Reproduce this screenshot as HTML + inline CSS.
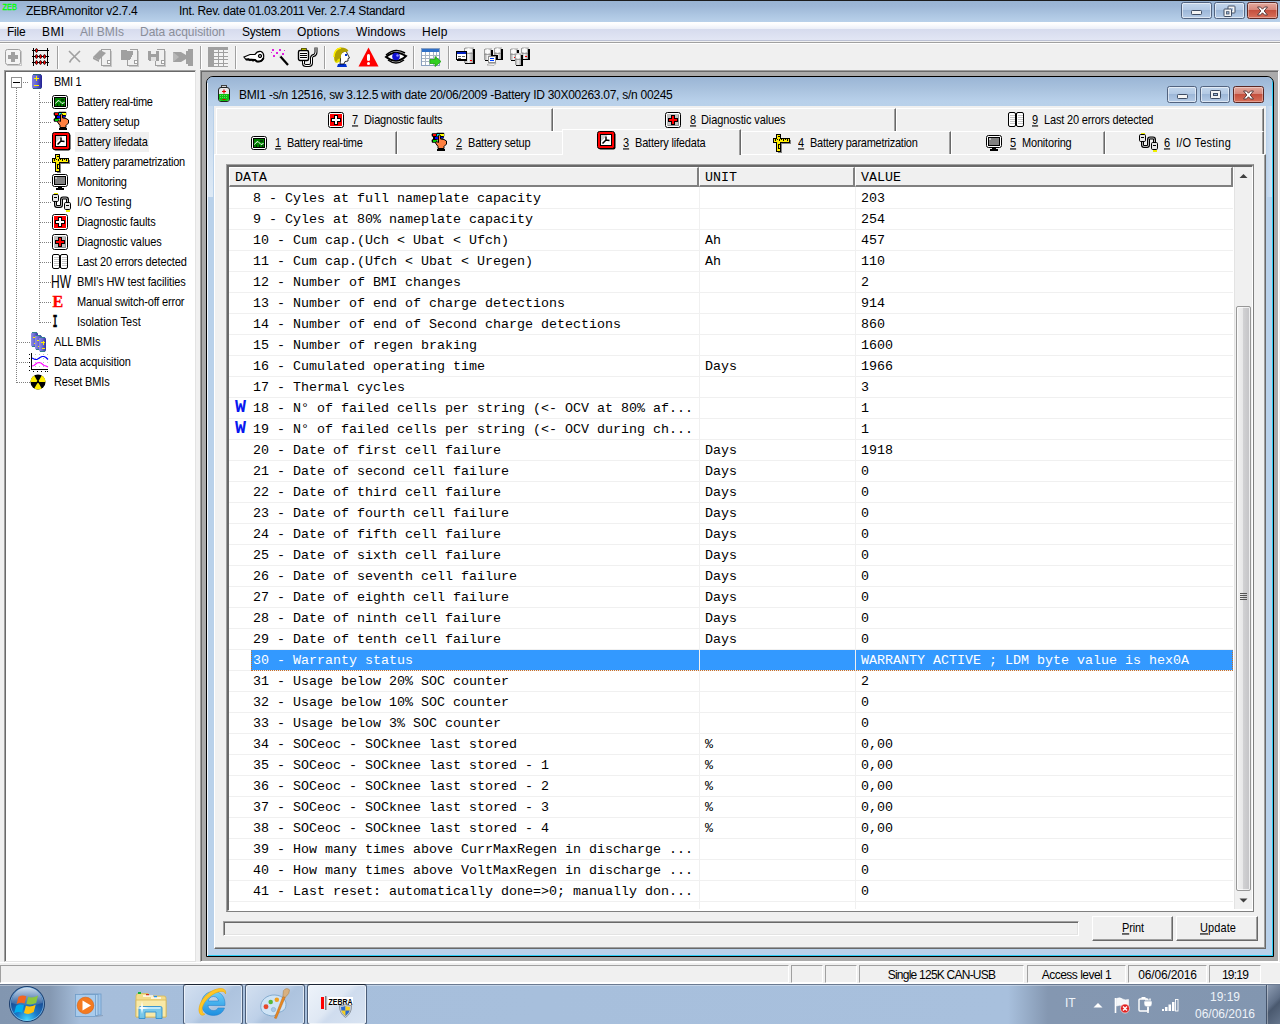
<!DOCTYPE html>
<html><head><meta charset="utf-8"><title>ZEBRAmonitor v2.7.4</title>
<style>
*{box-sizing:border-box;margin:0;padding:0}
html,body{width:1280px;height:1024px;overflow:hidden;background:#f0f0f0;font-family:"Liberation Sans",sans-serif;color:#000}
.a{position:absolute}
svg{position:absolute;overflow:visible}
/* ---------- main title bar ---------- */
#title{left:0;top:0;width:1280px;height:22px;background:linear-gradient(#99b4d3 0,#9db7d6 5px,#adc6e2 14px,#b9d1ea 21px);border-top:1px solid #1c1c1c}
#title span{position:absolute;top:3px;font-size:12px;white-space:nowrap;color:#000}
.cb{position:absolute;top:5px;height:17px;border:1px solid #52637f;border-radius:2.500px;background:linear-gradient(#c3d6ec 0,#b3c9e4 45%,#9db7d8 50%,#b5cbe6 100%);box-shadow:inset 0 0 0 1px rgba(255,255,255,.55)}
.cb.x{border-color:#5b2824;background:linear-gradient(#e3a99d 0,#d5867a 45%,#c4503e 50%,#d8705a 100%);box-shadow:inset 0 0 0 1px rgba(255,255,255,.35)}
/* ---------- menu ---------- */
#menu{left:0;top:22px;width:1280px;height:19px;background:linear-gradient(#ffffff 0,#fdfdfe 2px,#eceff8 7px,#d6dbee 7px,#e2e6f4 18px,#bcc1d4 18px,#bcc1d4 19px)}
#menu span{position:absolute;top:3px;font-size:12px;white-space:nowrap}
#menu span.g{color:#8a8e99}
/* ---------- toolbar ---------- */
#tb{left:0;top:41px;width:1280px;height:29px;background:linear-gradient(#f0f0f0 0,#f0f0f0 1px,#a0a0a0 1px,#a0a0a0 2px,#fff 2px,#fff 3px,#f0f0f0 3px)}
.sep{position:absolute;top:5px;width:2px;height:23px;border-left:1px solid #a0a0a0;border-right:1px solid #fff}
/* ---------- tree ---------- */
#tree{left:4px;top:70px;width:192px;height:892px;background:#fff;border:1px solid #a0a0a0;border-right-color:#e3e3e3;border-bottom-color:#e3e3e3;box-shadow:inset 1px 1px 0 #696969}
.ti{position:absolute;font-size:11px;white-space:nowrap;height:20px;line-height:20px;letter-spacing:0}
.ti b,.tl b,.btn b{display:inline-block;font-weight:normal;transform:scaleY(1.13);transform-origin:0 62%}
/* ---------- mdi ---------- */
#mdi{left:200px;top:70px;width:1079px;height:892px;background:#ababab;border:1px solid #a0a0a0;border-right-color:#fff;border-bottom-color:#fff;box-shadow:inset 1px 1px 0 #696969}
#child{left:206px;top:76px;width:1068px;height:881px;background:#b9d1ea;border:1px solid #000;border-radius:7px 7px 0 0;box-shadow:inset -1px -1px 0 0 #2ccdf6}
#ctitle{left:0px;top:0px;width:1065px;height:29px;border-radius:6px 6px 0 0;background:linear-gradient(#9ab5d5 0,#a9c2de 12px,#b8d0ea 24px,#b9d1ea 28px)}
#ctitle span{position:absolute;left:32px;top:11px;font-size:12px;white-space:nowrap}
#client{left:7px;top:29px;width:1052px;height:843px;background:#f0f0f0}
/* tabs */
.tab{position:absolute;height:22px;background:#f0f0f0;border-top:1px solid #fff;border-left:1px solid #fff;border-right:1px solid #696969;box-shadow:inset -1px 0 0 #a0a0a0}
.tl{position:absolute;font-size:11px;white-space:nowrap;z-index:4;line-height:13px}
/* table */
#tbl{left:226px;top:164px;width:1028px;height:748px;border:1px solid #a0a0a0;border-right-color:#808080;border-bottom-color:#808080;background:#fff}
#tbl2{left:0;top:0;width:1026px;height:746px;border:2px solid #696969;border-right-width:1px;border-bottom-width:1px;border-right-color:#fff;border-bottom-color:#fff;}
#tin{left:229px;top:167px;width:1023px;height:742px;background:#fff;overflow:hidden;font-family:"Liberation Mono",monospace;font-size:13.33px}
.hd{position:absolute;top:0;height:20px;background:#f0f0f0;border-top:1px solid #fff;border-left:1px solid #fff;border-right:2px solid #808080;border-bottom:2px solid #808080;font-size:13.33px;line-height:19px;padding-left:5px}
.row{position:absolute;left:0;width:1004px;height:21px;border-bottom:1px solid #f0f0f0;line-height:22px;white-space:pre}
.row span{position:absolute;top:0;height:20px}
.row .d{left:22px;width:448px;padding-left:2px}
.row .u{left:476px}
.row .v{left:632px}
.row.sel .d{background:#3399ff;color:#fff}
.row.sel .u{left:470px;width:156px;background:#3399ff}
.row.sel .v{left:627px;width:377px;padding-left:5px;background:#3399ff;color:#fff}
.row .w{position:absolute;left:4px;top:-1px;color:#0000d0;font-family:"Liberation Serif",serif;font-size:15px;font-weight:bold;-webkit-text-stroke:.4px #0000d0}
.foc{position:absolute;left:22px;top:0;width:982px;height:21px;border:1px dotted #c8702a;border-top-color:transparent;z-index:6}
.vl{position:absolute;top:20px;width:1px;height:722px;background:#f0f0f0;z-index:5}
/* status */
#status{left:0;top:962px;width:1280px;height:22px;background:#f0f0f0;border-top:1px solid #fff;border-bottom:1px solid #fff}
.sp{position:absolute;top:2px;height:18px;border:1px solid #a0a0a0;border-right-color:#fff;border-bottom-color:#fff;font-size:12px;text-align:center;line-height:18px;white-space:nowrap}
/* taskbar */
#task{left:0;top:984px;width:1280px;height:40px;background:linear-gradient(90deg,#8296b0 0,#8498b2 50px,#a6bedb 80px,#a8c0dd 1008px,#8497b1 1048px,#8296b0 1280px);border-top:1px solid #6b7a91;box-shadow:inset 0 1px 0 rgba(255,255,255,.35)}
.tbtn{position:absolute;top:-1px;width:60px;height:41px;border:1px solid #4b5d78;border-top-color:#1b2535;border-radius:3px;background:linear-gradient(135deg,#d3e0f0 0,#bdd0e8 45%,#adc3de 55%,#b6cbe5 100%);box-shadow:inset 0 0 0 1px rgba(255,255,255,.6)}
.tbtn.act{background:linear-gradient(135deg,#eef3fa 0,#dfe8f4 45%,#cfdcee 55%,#d9e4f2 100%)}
.btn{position:absolute;height:25px;border:1px solid #fff;border-right-color:#696969;border-bottom-color:#696969;box-shadow:inset -1px -1px 0 #a0a0a0;font-size:11px;text-align:center;line-height:20px;background:#f0f0f0}
</style></head><body>

<!-- main title -->
<div id="title" class="a">
<svg style="left:2px;top:0" width="20" height="16"><text x="0.500" y="8.500" font-family="Liberation Sans, sans-serif" font-size="9.500" fill="#00ff00" stroke="#00ff00" stroke-width=".3" textLength="14.500" lengthAdjust="spacingAndGlyphs">ZEB</text></svg>
<span style="left:26px;letter-spacing:-0.239px">ZEBRAmonitor v2.7.4</span>
<span style="left:179px;letter-spacing:-0.301px">Int. Rev. date 01.03.2011 Ver. 2.7.4 Standard</span>
<div class="cb" style="left:1181px;top:1px;width:31px"><svg width="29" height="15" style="left:0;top:0"><rect x="9.500" y="7.500" width="10" height="4" rx=".8" fill="#f4f4f4" stroke="#3e4c63"/></svg></div>
<div class="cb" style="left:1214px;top:1px;width:31px"><svg width="29" height="15" style="left:0;top:0"><rect x="13" y="3" width="7" height="7" rx=".8" fill="#f4f4f4" stroke="#3e4c63"/><rect x="15" y="5" width="3" height="3" fill="#a9c0de"/><rect x="9" y="6" width="7.500" height="7.500" rx=".8" fill="#f4f4f4" stroke="#3e4c63"/><rect x="11.500" y="8.700" width="2.500" height="2.300" fill="#9db7d8" stroke="#3e4c63" stroke-width=".8"/></svg></div>
<div class="cb x" style="left:1247px;top:1px;width:31px"><svg width="29" height="15" style="left:0;top:0.500px"><path d="M9.500 3 L12.500 3 L14.500 5.200 L16.500 3 L19.500 3 L16.200 7 L19.500 11 L16.500 11 L14.500 8.800 L12.500 11 L9.500 11 L12.800 7 Z" fill="#fff" stroke="#5b3a3a" stroke-width="1"/></svg></div>
</div>

<!-- menu -->
<div id="menu" class="a">
<span class="" style="left:7px;letter-spacing:-0.211px">File</span><span class="" style="left:42px;letter-spacing:0.385px">BMI</span><span class="g" style="left:80px;letter-spacing:-0.002px">All BMIs</span><span class="g" style="left:140px;letter-spacing:-0.024px">Data acquisition</span><span class="" style="left:242px;letter-spacing:-0.253px">System</span><span class="" style="left:297px;letter-spacing:0.199px">Options</span><span class="" style="left:356px;letter-spacing:0.152px">Windows</span><span class="" style="left:422px;letter-spacing:0.266px">Help</span>
</div>

<!-- toolbar -->
<div id="tb" class="a">
<svg style="left:5px;top:8px" width="17" height="17" viewBox="0 0 17 17" shape-rendering="crispEdges" ><rect x=".5" y=".5" width="15" height="15" rx="2" fill="#f4f4f4" stroke="#a0a0a0" shape-rendering="auto"/><path d="M1.500 16.500H15.500Q16.500 16.500 16.500 15.500V1.500" stroke="#c8c8c8" fill="none"/><path d="M6 3h4v3h3v4h-3v3h-4v-3h-3v-4h3z" fill="#a0a0a0"/></svg>
<svg style="left:32px;top:7px" width="18" height="18" viewBox="0 0 18 18" shape-rendering="crispEdges" ><path d="M1.500 0V18M15.500 0V18M0 2.500H17M0 8.500H17M0 14.500H17" stroke="#000" fill="none"/><ellipse cx="4.5" cy="2.5" rx="1.100" ry="2" fill="#f00" stroke="#000" stroke-width=".7" shape-rendering="auto"/><ellipse cx="4.5" cy="8.5" rx="1.100" ry="2" fill="#f00" stroke="#000" stroke-width=".7" shape-rendering="auto"/><ellipse cx="8.5" cy="8.5" rx="1.100" ry="2" fill="#f00" stroke="#000" stroke-width=".7" shape-rendering="auto"/><ellipse cx="12.5" cy="8.5" rx="1.100" ry="2" fill="#f00" stroke="#000" stroke-width=".7" shape-rendering="auto"/><ellipse cx="4.5" cy="14.5" rx="1.100" ry="2" fill="#f00" stroke="#000" stroke-width=".7" shape-rendering="auto"/><ellipse cx="8.5" cy="14.5" rx="1.100" ry="2" fill="#f00" stroke="#000" stroke-width=".7" shape-rendering="auto"/><ellipse cx="12.5" cy="14.5" rx="1.100" ry="2" fill="#f00" stroke="#000" stroke-width=".7" shape-rendering="auto"/></svg>
<div class="sep" style="left:57px"></div>
<svg style="left:68px;top:9px" width="15" height="14" viewBox="0 0 15 14" shape-rendering="crispEdges" ><path d="M1 1 L12 12 M12 1 L3 10 L1.500 12.500" stroke="#a0a0a0" stroke-width="1.600" fill="none" shape-rendering="auto"/></svg>
<svg style="left:92px;top:7px" width="21" height="19" viewBox="0 0 21 19" shape-rendering="crispEdges" ><path d="M9.500 1.500H18.500V17.500H9.500Z" fill="#f0f0f0" stroke="#a0a0a0"/><path d="M1 9 L8 2 L14 5 L7 12 Z" fill="#a0a0a0" shape-rendering="auto"/><path d="M1 9 L7 12 L7 14 L1 11 Z" fill="#a0a0a0" shape-rendering="auto"/><rect x="15.500" y="12.500" width="3" height="3" fill="#fff" stroke="#a0a0a0"/><path d="M10.500 18.500H19.500V3" stroke="#c8c8c8" fill="none"/></svg>
<svg style="left:120px;top:7px" width="21" height="19" viewBox="0 0 21 19" shape-rendering="crispEdges" ><path d="M9.500 1.500H17.500V17.500H7.500V10" fill="#f0f0f0" stroke="#a0a0a0"/><path d="M1 2h5l1 1h6v3H1z" fill="#a0a0a0"/><path d="M1 6 H13 L10 12 H1Z" fill="#a0a0a0"/><rect x="14.500" y="12.500" width="3" height="3" fill="#fff" stroke="#a0a0a0"/><path d="M8.500 18.500H18.500V3" stroke="#c8c8c8" fill="none"/></svg>
<svg style="left:147px;top:7px" width="21" height="19" viewBox="0 0 21 19" shape-rendering="crispEdges" ><path d="M9.500 1.500H17.500V17.500H8.500V12" fill="#f0f0f0" stroke="#a0a0a0"/><path d="M1 3h11v10H2l-1-1z" fill="#a0a0a0"/><rect x="4" y="3" width="5" height="3" fill="#f0f0f0"/><rect x="4" y="9" width="5" height="4" fill="#e0e0e0"/><rect x="14.500" y="12.500" width="3" height="3" fill="#fff" stroke="#a0a0a0"/><path d="M9.500 18.500H18.500V3" stroke="#c8c8c8" fill="none"/></svg>
<svg style="left:173px;top:7px" width="21" height="19" viewBox="0 0 21 19" shape-rendering="crispEdges" ><path d="M0 4 H8 L13 7 V3 H15 V1 H20 V18 H15 V16 H13 V11 L8 14 H0 Z" fill="#a0a0a0" shape-rendering="auto"/><path d="M0 4 L6 9 L0 14Z" fill="#b8b8b8" shape-rendering="auto"/></svg>
<div class="sep" style="left:200px"></div>
<svg style="left:208px;top:6px" width="20" height="20" viewBox="0 0 20 20" shape-rendering="crispEdges" ><rect x="0" y="0" width="20" height="20" fill="#a0a0a0"/><rect x="6" y="3.0" width="4" height="2.400" fill="#f4f4f4"/><rect x="11" y="3.0" width="4" height="2.400" fill="#f4f4f4"/><rect x="16" y="3.0" width="4" height="2.400" fill="#f4f4f4"/><rect x="6" y="6.4" width="4" height="2.400" fill="#f4f4f4"/><rect x="11" y="6.4" width="4" height="2.400" fill="#f4f4f4"/><rect x="16" y="6.4" width="4" height="2.400" fill="#f4f4f4"/><rect x="6" y="9.8" width="4" height="2.400" fill="#f4f4f4"/><rect x="11" y="9.8" width="4" height="2.400" fill="#f4f4f4"/><rect x="16" y="9.8" width="4" height="2.400" fill="#f4f4f4"/><rect x="6" y="13.2" width="4" height="2.400" fill="#f4f4f4"/><rect x="11" y="13.2" width="4" height="2.400" fill="#f4f4f4"/><rect x="16" y="13.2" width="4" height="2.400" fill="#f4f4f4"/><rect x="6" y="16.6" width="4" height="2.400" fill="#f4f4f4"/><rect x="11" y="16.6" width="4" height="2.400" fill="#f4f4f4"/><rect x="16" y="16.6" width="4" height="2.400" fill="#f4f4f4"/></svg>
<div class="sep" style="left:235px"></div>
<svg style="left:243px;top:9px" width="22" height="13" viewBox="0 0 22 13" shape-rendering="crispEdges" ><path d="M1 7 L7 4.500 H12 Q14 1 18 1.500 Q21.500 3 20.500 8 Q19 12 14 11.500 L12 10 L10 11 L8.500 9.500 L7 10.500 L5.500 9 L3 9.500 Z" fill="#fff" stroke="#000" stroke-width="1.200" shape-rendering="auto"/><path d="M3 9.500 L12 10 L14 11.500 Q19 12 20.500 8" stroke="#000" stroke-width="2" fill="none" shape-rendering="auto"/><circle cx="17" cy="6" r="1.700" fill="#808080" stroke="#000" shape-rendering="auto"/></svg>
<svg style="left:271px;top:7px" width="18" height="19" viewBox="0 0 18 19" shape-rendering="crispEdges" ><path d="M9 8 L17 17" stroke="#000" stroke-width="2.200" shape-rendering="auto"/><path d="M7.500 6.500 L9.500 8.500" stroke="#e8e8e8" stroke-width="2.200" shape-rendering="auto"/><g fill="#e020e0"><rect x="1" y="1" width="2" height="2"/><rect x="5" y="4" width="2" height="2"/><rect x="8" y="1" width="2" height="2"/><rect x="11" y="5" width="2" height="2"/><rect x="2" y="7" width="2" height="2"/><rect x="13" y="2" width="1" height="1"/><rect x="0" y="4" width="1" height="1"/></g></svg>
<svg style="left:297px;top:6px" width="21" height="20" viewBox="0 0 21 20" shape-rendering="crispEdges" ><rect x="4" y="1" width="5" height="2" fill="#ee0" stroke="#000" stroke-width=".6"/><rect x="1.500" y="3.500" width="10" height="10" rx="1.500" fill="#fff" stroke="#000" stroke-width="1.400" shape-rendering="auto"/><path d="M3 6.500h7M3 8.500h7M3 10.500h7" stroke="#000"/><path d="M6.500 14 V16.500 Q6.500 18.500 9 18.500 H12 Q14.500 18.500 14.500 16 V11 Q14.500 9 16.500 8.500 Q19 8 19 5 V0.500" fill="none" stroke="#000" stroke-width="3" shape-rendering="auto"/><path d="M6.500 14 V16.500 Q6.500 18.500 9 18.500 H12 Q14.500 18.500 14.500 16 V11 Q14.500 9 16.500 8.500 Q19 8 19 5 V0.500" fill="none" stroke="#fff" stroke-width="1" shape-rendering="auto"/></svg>
<div class="sep" style="left:324px"></div>
<svg style="left:333px;top:6px" width="18" height="20" viewBox="0 0 18 20" shape-rendering="crispEdges" ><path d="M2 8 Q0 16 4 16 L8 14 L9 6 Z" fill="#e8e000" shape-rendering="auto"/><path d="M5 17 L4 20 H14 L13 17 Z" fill="#0030d0" shape-rendering="auto"/><path d="M7 6 L13 4 L15 8 L16.500 11 L15 11.500 L15 14 L12 14.500 L11 17 L7 17 L7.500 13 Z" fill="#fff" stroke="#000" stroke-width=".8" shape-rendering="auto"/><path d="M1 9 Q1 1 8 .5 Q14 .5 15.500 4 L13 5 L10 5 L8 8 L8 11 L5 12 L3 15 Q1 13 1 9Z" fill="#b0a000" shape-rendering="auto"/><path d="M1 10 Q1 2 8 1" stroke="#ffef00" stroke-width="1.600" fill="none" shape-rendering="auto"/><rect x="12" y="7" width="2" height="2" fill="#0030d0"/></svg>
<svg style="left:358px;top:6px" width="21" height="20" viewBox="0 0 21 20" shape-rendering="crispEdges" ><path d="M10.500 0.500 L20.500 19.500 H0.500 Z" fill="#f00" shape-rendering="auto"/><rect x="9" y="7" width="3" height="7" rx="1.500" fill="#fff" shape-rendering="auto"/><circle cx="10.500" cy="16.500" r="1.500" fill="#fff" shape-rendering="auto"/></svg>
<svg style="left:385px;top:7px" width="22" height="16" viewBox="0 0 22 16" shape-rendering="crispEdges" ><path d="M1 7 Q10 -1 20 5" stroke="#000" stroke-width="1.500" fill="none" shape-rendering="auto"/><path d="M1 9 Q10 1 21 8 Q12 17 1 9Z" fill="#fff" stroke="#000" stroke-width="2" shape-rendering="auto"/><circle cx="11" cy="8.500" r="3.800" fill="#1010d0" shape-rendering="auto"/><circle cx="12.500" cy="7.500" r="1.200" fill="#9090ff" shape-rendering="auto"/><path d="M3 12 Q11 18 19 12" stroke="#000" stroke-width="1.500" fill="none" shape-rendering="auto"/></svg>
<div class="sep" style="left:413px"></div>
<svg style="left:421px;top:7px" width="21" height="19" viewBox="0 0 21 19" shape-rendering="crispEdges" ><rect x=".5" y=".5" width="18" height="17" fill="#fff" stroke="#8aa0c0"/><rect x="1" y="1" width="17" height="3" fill="#3070c8"/><path d="M1 7.500h17M1 10.500h17M1 13.500h17M4.500 4v13M8.500 4v13M12.500 4v13M15.500 4v13" stroke="#a8b4c4"/><path d="M9 11.500 H14 V8.500 L20 13.500 L14 18.500 V15.500 H9 Z" fill="#30d020" stroke="#20a010" stroke-width=".8" shape-rendering="auto"/></svg>
<div class="sep" style="left:448px"></div>
<svg style="left:456px;top:6px" width="21" height="20" viewBox="0 0 21 20" shape-rendering="crispEdges" ><defs><linearGradient id="tg" x1="0" x2="1"><stop offset="0" stop-color="#909090"/><stop offset=".5" stop-color="#f2f2f2"/><stop offset="1" stop-color="#a4a4a4"/></linearGradient></defs><g transform="translate(8,0)"><rect x="8.5" y="1.500" width="2.500" height="15" fill="#000"/><rect x="1" y="15" width="10" height="2" fill="#000"/><rect x="1" y="0" width="9" height="2" fill="#c8c8c8"/><rect x="0" y="1" width="9" height="15" fill="url(#tg)"/><rect x="1" y="2" width="7" height="2.500" fill="#fff" fill-opacity=".85"/><rect x="0" y="5.500" width="9" height="1" fill="#888" fill-opacity=".7"/><rect x="6" y="13" width="2" height="1.300" fill="#f00"/></g><rect x=".5" y="4.500" width="10" height="8" fill="#fff" stroke="#000"/><rect x="1" y="5" width="9" height="2" fill="#0020c0"/><path d="M2 9.500h3M6 9.500h3M2 11.500h3" stroke="#606060"/><path d="M1 13.500h10" stroke="#000"/></svg>
<svg style="left:483px;top:6px" width="21" height="20" viewBox="0 0 21 20" shape-rendering="crispEdges" ><g transform="translate(1,1)"><rect x="6.5" y="1.500" width="2.500" height="11" fill="#000"/><rect x="1" y="11" width="8" height="2" fill="#000"/><rect x="1" y="0" width="7" height="2" fill="#c8c8c8"/><rect x="0" y="1" width="7" height="11" fill="url(#tg)"/><rect x="1" y="2" width="5" height="2.500" fill="#fff" fill-opacity=".85"/><rect x="0" y="5.500" width="7" height="1" fill="#888" fill-opacity=".7"/></g><g transform="translate(11,0)"><rect x="6.5" y="1.500" width="2.500" height="11" fill="#000"/><rect x="1" y="11" width="8" height="2" fill="#000"/><rect x="1" y="0" width="7" height="2" fill="#c8c8c8"/><rect x="0" y="1" width="7" height="11" fill="url(#tg)"/><rect x="1" y="2" width="5" height="2.500" fill="#fff" fill-opacity=".85"/><rect x="0" y="5.500" width="7" height="1" fill="#888" fill-opacity=".7"/></g><rect x="10" y="8" width="5" height="4" fill="#000"/><rect x="5.500" y="9.500" width="7" height="6" fill="#fff" stroke="#909090"/><rect x="7" y="11" width="4" height="1" fill="#0040ff"/><rect x="7" y="13" width="4" height="1" fill="#0040ff"/><path d="M4 18 L6 16.500 H13 L11 18.500 Z" fill="#f4f4f4" stroke="#909090" stroke-width=".6" shape-rendering="auto"/></svg>
<svg style="left:510px;top:6px" width="21" height="20" viewBox="0 0 21 20" shape-rendering="crispEdges" ><g transform="translate(0,1)"><rect x="6.5" y="1.500" width="2.500" height="11" fill="#000"/><rect x="1" y="11" width="8" height="2" fill="#000"/><rect x="1" y="0" width="7" height="2" fill="#c8c8c8"/><rect x="0" y="1" width="7" height="11" fill="url(#tg)"/><rect x="1" y="2" width="5" height="2.500" fill="#fff" fill-opacity=".85"/><rect x="0" y="5.500" width="7" height="1" fill="#888" fill-opacity=".7"/><rect x="4" y="9" width="2" height="1.300" fill="#f00"/></g><g transform="translate(11,0)"><rect x="6.5" y="1.500" width="2.500" height="11" fill="#000"/><rect x="1" y="11" width="8" height="2" fill="#000"/><rect x="1" y="0" width="7" height="2" fill="#c8c8c8"/><rect x="0" y="1" width="7" height="11" fill="url(#tg)"/><rect x="1" y="2" width="5" height="2.500" fill="#fff" fill-opacity=".85"/><rect x="0" y="5.500" width="7" height="1" fill="#888" fill-opacity=".7"/><rect x="4" y="9" width="2" height="1.300" fill="#f00"/></g><g transform="translate(5,6)"><rect x="5.5" y="1.500" width="2.500" height="11" fill="#000"/><rect x="1" y="11" width="7" height="2" fill="#000"/><rect x="1" y="0" width="6" height="2" fill="#c8c8c8"/><rect x="0" y="1" width="6" height="11" fill="url(#tg)"/><rect x="1" y="2" width="4" height="2.500" fill="#fff" fill-opacity=".85"/><rect x="0" y="5.500" width="6" height="1" fill="#888" fill-opacity=".7"/></g></svg>
</div>

<!-- tree -->
<div id="tree" class="a">
<div class="a" style="left:11px;top:17px;width:1px;height:295px;background:repeating-linear-gradient(#808080 0 1px,transparent 1px 2px)"></div>
<div class="a" style="left:34px;top:21px;width:1px;height:231px;background:repeating-linear-gradient(#808080 0 1px,transparent 1px 2px)"></div>
<div class="a" style="left:18px;top:11px;width:6px;height:1px;background:repeating-linear-gradient(90deg,#808080 0 1px,transparent 1px 2px)"></div>
<div class="a" style="left:35px;top:31px;width:11px;height:1px;background:repeating-linear-gradient(90deg,#808080 0 1px,transparent 1px 2px)"></div>
<div class="a" style="left:35px;top:51px;width:11px;height:1px;background:repeating-linear-gradient(90deg,#808080 0 1px,transparent 1px 2px)"></div>
<div class="a" style="left:35px;top:71px;width:11px;height:1px;background:repeating-linear-gradient(90deg,#808080 0 1px,transparent 1px 2px)"></div>
<div class="a" style="left:35px;top:91px;width:11px;height:1px;background:repeating-linear-gradient(90deg,#808080 0 1px,transparent 1px 2px)"></div>
<div class="a" style="left:35px;top:111px;width:11px;height:1px;background:repeating-linear-gradient(90deg,#808080 0 1px,transparent 1px 2px)"></div>
<div class="a" style="left:35px;top:131px;width:11px;height:1px;background:repeating-linear-gradient(90deg,#808080 0 1px,transparent 1px 2px)"></div>
<div class="a" style="left:35px;top:151px;width:11px;height:1px;background:repeating-linear-gradient(90deg,#808080 0 1px,transparent 1px 2px)"></div>
<div class="a" style="left:35px;top:171px;width:11px;height:1px;background:repeating-linear-gradient(90deg,#808080 0 1px,transparent 1px 2px)"></div>
<div class="a" style="left:35px;top:191px;width:11px;height:1px;background:repeating-linear-gradient(90deg,#808080 0 1px,transparent 1px 2px)"></div>
<div class="a" style="left:35px;top:211px;width:11px;height:1px;background:repeating-linear-gradient(90deg,#808080 0 1px,transparent 1px 2px)"></div>
<div class="a" style="left:35px;top:231px;width:11px;height:1px;background:repeating-linear-gradient(90deg,#808080 0 1px,transparent 1px 2px)"></div>
<div class="a" style="left:35px;top:251px;width:11px;height:1px;background:repeating-linear-gradient(90deg,#808080 0 1px,transparent 1px 2px)"></div>
<div class="a" style="left:12px;top:271px;width:13px;height:1px;background:repeating-linear-gradient(90deg,#808080 0 1px,transparent 1px 2px)"></div>
<div class="a" style="left:12px;top:291px;width:13px;height:1px;background:repeating-linear-gradient(90deg,#808080 0 1px,transparent 1px 2px)"></div>
<div class="a" style="left:12px;top:311px;width:13px;height:1px;background:repeating-linear-gradient(90deg,#808080 0 1px,transparent 1px 2px)"></div>
<div class="a" style="left:6px;top:6px;width:11px;height:11px;border:1px solid #919191;background:#fff"></div><div class="a" style="left:8px;top:11px;width:7px;height:1px;background:#000"></div>
<svg style="left:27px;top:3px" width="10" height="15" viewBox="0 0 10 15" shape-rendering="crispEdges" ><defs><linearGradient id="bg1" x1="0" x2="1"><stop offset="0" stop-color="#8080e0"/><stop offset=".5" stop-color="#6060d0"/><stop offset="1" stop-color="#202090"/></linearGradient></defs>
<rect x="0" y=".5" width="10" height="14" rx="1.500" fill="url(#bg1)" shape-rendering="auto"/><rect x="1" y="0" width="8" height="1" fill="#306080"/><rect x="1" y="14" width="8" height="1" fill="#306080"/>
<path d="M2 4.500h5M4.500 2v5M2 11.500h5" stroke="#ffee00" stroke-width="1.200"/></svg>
<div class="ti" style="left:49px;top:1px;letter-spacing:-0.267px"><b>BMI 1</b></div>
<div class="ti" style="left:72px;top:21px;letter-spacing:-0.294px"><b>Battery real-time</b></div>
<div class="ti" style="left:72px;top:41px;letter-spacing:-0.179px"><b>Battery setup</b></div>
<div class="ti" style="left:70px;top:61px;padding:0 1px 0 2px;background:#f0f0f0;letter-spacing:-0.167px"><b>Battery lifedata</b></div>
<div class="ti" style="left:72px;top:81px;letter-spacing:-0.253px"><b>Battery parametrization</b></div>
<div class="ti" style="left:72px;top:101px;letter-spacing:-0.156px"><b>Monitoring</b></div>
<div class="ti" style="left:72px;top:121px;letter-spacing:0.219px"><b>I/O Testing</b></div>
<div class="ti" style="left:72px;top:141px;letter-spacing:-0.119px"><b>Diagnostic faults</b></div>
<div class="ti" style="left:72px;top:161px;letter-spacing:-0.089px"><b>Diagnostic values</b></div>
<div class="ti" style="left:72px;top:181px;letter-spacing:-0.153px"><b>Last 20 errors detected</b></div>
<div class="ti" style="left:72px;top:201px;letter-spacing:-0.121px"><b>BMI's HW test facilities</b></div>
<div class="ti" style="left:72px;top:221px;letter-spacing:-0.19px"><b>Manual switch-off error</b></div>
<div class="ti" style="left:72px;top:241px;letter-spacing:-0.023px"><b>Isolation Test</b></div>
<svg style="left:47px;top:24px" width="16" height="14" viewBox="0 0 16 14" shape-rendering="crispEdges" ><rect x=".5" y=".5" width="15" height="13" rx="2" fill="#fff" stroke="#000" shape-rendering="auto"/>
<rect x="2.500" y="2.500" width="11" height="9" fill="#008000" stroke="#000"/>
<path d="M3.500 8.500 L5 6.500 L7 5.500 L8.500 7 L10 8.500 L12.500 7.500" stroke="#fff" fill="none" shape-rendering="auto"/>
<rect x="9" y="4" width="3" height="2" fill="#004000"/><path d="M5 9v2M8 9v2M11 9v2" stroke="#003000"/></svg>
<svg style="left:48px;top:41px" width="17" height="18" viewBox="0 0 17 18" shape-rendering="crispEdges" ><rect x="0.7" y="0.19999999999999996" width="5.1" height="3.6" rx="1" fill="#000" shape-rendering="auto"/><rect x="5.2" y="-0.30000000000000004" width="4.1" height="3.6" rx="1" fill="#000" shape-rendering="auto"/><rect x="8.2" y="-0.30000000000000004" width="5.1" height="4.1" rx="1" fill="#000" shape-rendering="auto"/><rect x="3.2" y="3.2" width="5.1" height="3.6" rx="1" fill="#000" shape-rendering="auto"/><rect x="8.7" y="2.7" width="4.1" height="3.1" rx="1" fill="#000" shape-rendering="auto"/><rect x="0.7" y="6.2" width="5.6" height="3.6" rx="1" fill="#000" shape-rendering="auto"/><rect x="1.500" y="3" width="3" height="4" fill="#000"/><rect x="1.5" y="1" width="3.5" height="2" fill="#f00"/><rect x="6" y="0.5" width="2.5" height="2" fill="#0dd"/><rect x="9" y="0.5" width="3.5" height="2.5" fill="#ff0"/><rect x="4" y="4" width="3.5" height="2" fill="#00f"/><rect x="9.5" y="3.5" width="2.5" height="1.5" fill="#00f"/><rect x="1.5" y="7" width="4" height="2" fill="#0c0"/><path d="M7.500 2.500 L7.500 9.500 L5.500 8.500 L4.500 10 L7 13.500 L7 15.500 L13 15.500 L13 13.500 L15.500 11 L15.500 8 L13 6.500 L9.500 6 L9.500 2.500 Q8.500 1.500 7.500 2.500 Z" fill="#ff8040" stroke="#000" shape-rendering="auto" stroke-width="1"/>
<rect x="6" y="16" width="8" height="2" fill="#000"/></svg>
<svg style="left:47px;top:61px" width="19" height="19" viewBox="0 0 19 19" shape-rendering="crispEdges" ><rect x="1.500" y="1.500" width="17" height="17" rx="2" fill="#000" shape-rendering="auto"/>
<rect x=".5" y=".5" width="17" height="17" rx="2" fill="#f00" stroke="#000" shape-rendering="auto"/>
<rect x="3.500" y="3.500" width="11" height="11" fill="#fff" stroke="#000"/>
<path d="M4 10 L10 4 L4 4 Z" fill="#d0d0d0"/>
<path d="M9 5.500 L9 9 L12.500 9.500 M9 9 L5.500 12.500" stroke="#000" stroke-width="1.500" fill="none" shape-rendering="auto"/></svg>
<svg style="left:47px;top:83px" width="18" height="19" viewBox="0 0 18 19" shape-rendering="crispEdges" ><path d="M3.500 .5 H7.500 V4.500 H16.500 V8.500 H7.500 V17.500 H3.500 V8.500 H.5 V4.500 H3.500 Z" fill="#ffee00" stroke="#000"/>
<path d="M2.500 5v2M4.500 5v1M6.500 5v2M8.500 5v1M10.500 5v2M12.500 5v1M14.500 5v2" stroke="#000"/>
<path d="M5 2.500h2M5 10.500h2M5 12.500h1M5 14.500h2M5 10v5" stroke="#000"/>
<path d="M17.500 5.500V9.500H8.500V18.500H4.500" stroke="#808080" fill="none"/></svg>
<svg style="left:47px;top:103px" width="16" height="16" viewBox="0 0 16 16" shape-rendering="crispEdges" ><rect x=".5" y=".5" width="15" height="12" rx="2" fill="#fff" stroke="#000" shape-rendering="auto"/>
<rect x="2.500" y="2.500" width="11" height="8" fill="#808080" stroke="#000"/>
<rect x="3" y="3" width="2" height="2" fill="#c0c0c0"/>
<rect x="6" y="13" width="4" height="1" fill="#000"/><rect x="4" y="14" width="8" height="1.500" fill="#000"/></svg>
<svg style="left:47px;top:122px" width="19" height="19" viewBox="0 0 19 19" shape-rendering="crispEdges" ><rect x="1.500" y="0" width="4" height="2" fill="#ee0"/><rect x=".5" y="1.500" width="6" height="7" rx="1.200" fill="#e8e8e8" stroke="#000" shape-rendering="auto"/><rect x="2" y="4" width="3" height="1" fill="#000"/>
<path d="M3.500 9 V12 Q3.500 13.500 5 13.500 H8 Q9.500 13.500 9.500 12 V6.500 Q9.500 5 11 5 H14 Q15.500 5 15.500 6.500 V9" fill="none" stroke="#000" stroke-width="3" shape-rendering="auto"/>
<path d="M3.500 9 V12 Q3.500 13.500 5 13.500 H8 Q9.500 13.500 9.500 12 V6.500 Q9.500 5 11 5 H14 Q15.500 5 15.500 6.500 V9" fill="none" stroke="#b0b0b0" stroke-width="1" shape-rendering="auto"/>
<rect x="12.500" y="9.500" width="6" height="7" rx="1.200" fill="#e8e8e8" stroke="#000" shape-rendering="auto"/><rect x="14" y="12" width="3" height="1" fill="#000"/><rect x="13.500" y="16.500" width="4" height="2" fill="#ee0"/></svg>
<svg style="left:47px;top:143px" width="16" height="16" viewBox="0 0 16 16" shape-rendering="crispEdges" ><rect x=".5" y=".5" width="15" height="15" rx="2" fill="#fff" stroke="#000" shape-rendering="auto"/>
<rect x="2" y="2" width="12" height="12" fill="#f00"/>
<path d="M6.500 3.500 H9.500 V6.500 H12.500 V9.500 H9.500 V12.500 H6.500 V9.500 H3.500 V6.500 H6.500 Z" fill="#fff" stroke="#000"/></svg>
<svg style="left:47px;top:163px" width="16" height="16" viewBox="0 0 16 16" shape-rendering="crispEdges" ><rect x=".5" y=".5" width="15" height="15" rx="2" fill="#fff" stroke="#000" shape-rendering="auto"/>
<rect x="2" y="2" width="12" height="12" fill="#c0c0c0"/><path d="M13.500 3V13.500H3" stroke="#909090" fill="none"/>
<path d="M6.500 3.500 H9.500 V6.500 H12.500 V9.500 H9.500 V12.500 H6.500 V9.500 H3.500 V6.500 H6.500 Z" fill="#f00" stroke="#000"/></svg>
<svg style="left:47px;top:183px" width="16" height="15" viewBox="0 0 16 15" shape-rendering="crispEdges" ><rect x=".5" y=".5" width="7" height="14" rx="1.500" fill="#fff" stroke="#000" shape-rendering="auto"/>
<rect x="8.500" y=".5" width="7" height="14" rx="1.500" fill="#fff" stroke="#000" shape-rendering="auto"/>
<path d="M2 3.500h5M2 5.500h5M2 7.500h5M2 9.500h5M2 11.500h5M10 3.500h5M10 5.500h5M10 7.500h5M10 9.500h5M10 11.500h5" stroke="#c8c8c8"/>
<path d="M8 1v13" stroke="#000"/></svg>
<svg style="left:46px;top:203px" width="21" height="15" viewBox="0 0 21 15"><text x="0" y="13.500" font-family="Liberation Sans, sans-serif" font-size="18" textLength="20" lengthAdjust="spacingAndGlyphs" fill="#000">HW</text></svg>
<svg style="left:47px;top:223px" width="12" height="14" viewBox="0 0 12 14"><text x="0.5" y="12.500" font-family="Liberation Serif, serif" font-weight="bold" font-size="16" fill="#f00" stroke="#f00" stroke-width=".4">E</text></svg>
<svg style="left:45px;top:243px" width="12" height="14" viewBox="0 0 12 14"><text x="2.700" y="12.600" font-family="Liberation Mono, monospace" font-weight="bold" font-size="17.500" textLength="4.600" lengthAdjust="spacingAndGlyphs" fill="#000" stroke="#000" stroke-width=".5">I</text></svg>
<svg style="left:26px;top:261px" width="16" height="21" viewBox="0 0 16 21" shape-rendering="crispEdges" ><defs><linearGradient id="bg2" x1="0" x2="1"><stop offset="0" stop-color="#9090e8"/><stop offset=".5" stop-color="#6868d0"/><stop offset="1" stop-color="#3030a0"/></linearGradient></defs><g transform="translate(0,0)"><rect x="0" y=".5" width="7" height="14" rx="1.500" fill="url(#bg2)" shape-rendering="auto"/><rect x="1" y="0" width="5" height="1" fill="#308090"/><rect x="1" y="14" width="5" height="1" fill="#308090"/><path d="M2 5.500h4M4 3.500v4M2.500 11.500h3" stroke="#ffee00"/></g><g transform="translate(4,3)"><rect x="0" y=".5" width="7" height="14" rx="1.500" fill="url(#bg2)" shape-rendering="auto"/><rect x="1" y="0" width="5" height="1" fill="#308090"/><rect x="1" y="14" width="5" height="1" fill="#308090"/><path d="M2 5.500h4M4 3.500v4M2.500 11.500h3" stroke="#ffee00"/></g><g transform="translate(8,5)"><rect x="0" y=".5" width="7" height="14" rx="1.500" fill="url(#bg2)" shape-rendering="auto"/><rect x="1" y="0" width="5" height="1" fill="#308090"/><rect x="1" y="14" width="5" height="1" fill="#308090"/><path d="M2 5.500h4M4 3.500v4M2.500 11.500h3" stroke="#ffee00"/></g></svg>
<div class="ti" style="left:49px;top:261px;letter-spacing:-0.123px"><b>ALL BMIs</b></div>
<svg style="left:24px;top:282px" width="20" height="20" viewBox="0 0 20 20" shape-rendering="crispEdges" ><path d="M0 1.500h1M0 5.500h1M0 9.500h1M0 13.500h1M0 17.500h1M4 18.500h1M8 18.500h1M12 18.500h1M16 18.500h1M18 18.500h1" stroke="#000"/>
<path d="M6 1.500h1M10 1.500h1M14 1.500h1M18 1.500h1M6 5.500h1M10 5.500h1M14 5.500h1M18 5.500h1M6 9.500h1M10 9.500h1M14 9.500h1M18 9.500h1M6 13.500h1M10 13.500h1M14 13.500h1M18 13.500h1" stroke="#c0c0c0"/>
<path d="M2.500 0V16.500H19" fill="none" stroke="#000"/>
<path d="M3 5 L6 6.500 L8 6.500 L11 4.500 L13 3.500 L15 3.500 L17 4.500 L19 6.500" fill="none" stroke="#0000ff" shape-rendering="auto" stroke-width="1.200"/>
<path d="M3 13 L5 12.500 L8 10 L10 9.500 L12 10 L15 12.500 L17 13 L19 14" fill="none" stroke="#ff00ff" shape-rendering="auto" stroke-width="1.200"/></svg>
<div class="ti" style="left:49px;top:281px;letter-spacing:-0.093px"><b>Data acquisition</b></div>
<svg style="left:25px;top:303px" width="16" height="16" viewBox="0 0 16 16"><circle cx="8" cy="8" r="7.500" fill="#000"/>
<path d="M8 8 L4.250 1.500 A7.500 7.500 0 0 1 11.750 1.500 Z" fill="#ffee00" transform="rotate(60 8 8)"/>
<path d="M8 8 L4.250 1.500 A7.500 7.500 0 0 1 11.750 1.500 Z" fill="#ffee00" transform="rotate(180 8 8)"/>
<path d="M8 8 L4.250 1.500 A7.500 7.500 0 0 1 11.750 1.500 Z" fill="#ffee00" transform="rotate(300 8 8)"/>
<circle cx="8" cy="8" r="1.300" fill="#000"/></svg>
<div class="ti" style="left:49px;top:301px;letter-spacing:-0.126px"><b>Reset BMIs</b></div>
</div>

<!-- mdi -->
<div id="mdi" class="a"></div>
<div id="child" class="a">
 <div id="ctitle" class="a"><svg style="left:11px;top:8px" width="12" height="17" viewBox="0 0 12 17"><rect x="3.500" y=".5" width="5" height="2" fill="#d8d8d8" stroke="#404040" stroke-width="1"/><rect x=".5" y="2.500" width="11" height="14" rx="2.500" fill="#e8e8e8" stroke="#202020"/><path d="M1 9 H11 V14 Q11 16 9 16 H3 Q1 16 1 14 Z" fill="#10c010"/><path d="M2 10.500h8M2 12.500h8" stroke="#60e060" stroke-dasharray="1 1"/><path d="M4 6.500h4M6 4.500v4" stroke="#e00000" stroke-width="1.200"/><path d="M4.500 14.500h3" stroke="#e00000" stroke-width="1"/></svg><span style="letter-spacing:-0.27px">BMI1 -s/n 12516, sw 3.12.5 with date 20/06/2009 -Battery ID 30X00263.07, s/n 00245</span>
 <div class="cb" style="left:960px;top:9px;width:30px;height:17px"><svg width="28" height="15" style="left:0;top:0"><rect x="9.500" y="7.500" width="10" height="4" rx=".8" fill="#f4f4f4" stroke="#3e4c63"/></svg></div>
 <div class="cb" style="left:993px;top:9px;width:30px;height:17px"><svg width="28" height="15" style="left:0;top:0"><rect x="9.500" y="3.500" width="10" height="8" rx=".8" fill="#f4f4f4" stroke="#3e4c63"/><rect x="12.500" y="6.500" width="4" height="2" fill="#9db7d8" stroke="#3e4c63"/></svg></div>
 <div class="cb x" style="left:1026px;top:9px;width:31px;height:17px"><svg width="29" height="15" style="left:0;top:0.500px"><path d="M9.500 3 L12.500 3 L14.500 5.200 L16.500 3 L19.500 3 L16.200 7 L19.500 11 L16.500 11 L14.500 8.800 L12.500 11 L9.500 11 L12.800 7 Z" fill="#fff" stroke="#5b3a3a" stroke-width="1"/></svg></div>
 </div>
<div class="a" style="left:0;top:6px;width:1px;height:873px;background:#f3f7fc"></div>
 <div class="a" style="left:1px;top:29px;width:5px;height:91px;background:linear-gradient(#c6d9ee,#dde9f5)"></div>
 <div class="a" style="left:1060px;top:29px;width:5px;height:91px;background:linear-gradient(90deg,#c0d5ec,#d2e1f2)"></div>
 <div id="client" class="a"></div>
</div>
<div class="a" style="left:214px;top:154px;width:1052px;height:795px;border:1px solid #fff;border-right:1px solid #696969;border-bottom:1px solid #696969;box-shadow:inset -1px -1px 0 #a0a0a0;background:#f0f0f0"></div>
<div class="tab" style="left:216px;top:108px;width:337px;height:23px;"></div><svg style="z-index:4;left:328px;top:112px" width="16" height="16" viewBox="0 0 16 16" shape-rendering="crispEdges" ><rect x=".5" y=".5" width="15" height="15" rx="2" fill="#fff" stroke="#000" shape-rendering="auto"/>
<rect x="2" y="2" width="12" height="12" fill="#f00"/>
<path d="M6.500 3.500 H9.500 V6.500 H12.500 V9.500 H9.500 V12.500 H6.500 V9.500 H3.500 V6.500 H6.500 Z" fill="#fff" stroke="#000"/></svg><div class="tl" style="left:352px;top:114px"><b><u>7</u></b></div><div class="tl" style="left:364px;top:114px;letter-spacing:-0.131px"><b>Diagnostic faults</b></div>
<div class="tab" style="left:553px;top:108px;width:343px;height:23px;"></div><svg style="z-index:4;left:665px;top:112px" width="16" height="16" viewBox="0 0 16 16" shape-rendering="crispEdges" ><rect x=".5" y=".5" width="15" height="15" rx="2" fill="#fff" stroke="#000" shape-rendering="auto"/>
<rect x="2" y="2" width="12" height="12" fill="#c0c0c0"/><path d="M13.500 3V13.500H3" stroke="#909090" fill="none"/>
<path d="M6.500 3.500 H9.500 V6.500 H12.500 V9.500 H9.500 V12.500 H6.500 V9.500 H3.500 V6.500 H6.500 Z" fill="#f00" stroke="#000"/></svg><div class="tl" style="left:690px;top:114px"><b><u>8</u></b></div><div class="tl" style="left:701px;top:114px;letter-spacing:-0.101px"><b>Diagnostic values</b></div>
<div class="tab" style="left:896px;top:108px;width:368px;height:23px;"></div><svg style="z-index:4;left:1008px;top:112px" width="16" height="15" viewBox="0 0 16 15" shape-rendering="crispEdges" ><rect x=".5" y=".5" width="7" height="14" rx="1.500" fill="#fff" stroke="#000" shape-rendering="auto"/>
<rect x="8.500" y=".5" width="7" height="14" rx="1.500" fill="#fff" stroke="#000" shape-rendering="auto"/>
<path d="M2 3.500h5M2 5.500h5M2 7.500h5M2 9.500h5M2 11.500h5M10 3.500h5M10 5.500h5M10 7.500h5M10 9.500h5M10 11.500h5" stroke="#c8c8c8"/>
<path d="M8 1v13" stroke="#000"/></svg><div class="tl" style="left:1032px;top:114px"><b><u>9</u></b></div><div class="tl" style="left:1044px;top:114px;letter-spacing:-0.166px"><b>Last 20 errors detected</b></div>
<div class="tab" style="left:216px;top:131px;width:181px;height:23px;"></div><svg style="z-index:4;left:251px;top:136px" width="16" height="14" viewBox="0 0 16 14" shape-rendering="crispEdges" ><rect x=".5" y=".5" width="15" height="13" rx="2" fill="#fff" stroke="#000" shape-rendering="auto"/>
<rect x="2.500" y="2.500" width="11" height="9" fill="#008000" stroke="#000"/>
<path d="M3.500 8.500 L5 6.500 L7 5.500 L8.500 7 L10 8.500 L12.500 7.500" stroke="#fff" fill="none" shape-rendering="auto"/>
<rect x="9" y="4" width="3" height="2" fill="#004000"/><path d="M5 9v2M8 9v2M11 9v2" stroke="#003000"/></svg><div class="tl" style="left:275px;top:137px"><b><u>1</u></b></div><div class="tl" style="left:287px;top:137px;letter-spacing:-0.306px"><b>Battery real-time</b></div>
<div class="tab" style="left:397px;top:131px;width:167px;height:23px;"></div><svg style="z-index:4;left:431px;top:133px" width="17" height="18" viewBox="0 0 17 18" shape-rendering="crispEdges" ><rect x="0.7" y="0.19999999999999996" width="5.1" height="3.6" rx="1" fill="#000" shape-rendering="auto"/><rect x="5.2" y="-0.30000000000000004" width="4.1" height="3.6" rx="1" fill="#000" shape-rendering="auto"/><rect x="8.2" y="-0.30000000000000004" width="5.1" height="4.1" rx="1" fill="#000" shape-rendering="auto"/><rect x="3.2" y="3.2" width="5.1" height="3.6" rx="1" fill="#000" shape-rendering="auto"/><rect x="8.7" y="2.7" width="4.1" height="3.1" rx="1" fill="#000" shape-rendering="auto"/><rect x="0.7" y="6.2" width="5.6" height="3.6" rx="1" fill="#000" shape-rendering="auto"/><rect x="1.500" y="3" width="3" height="4" fill="#000"/><rect x="1.5" y="1" width="3.5" height="2" fill="#f00"/><rect x="6" y="0.5" width="2.5" height="2" fill="#0dd"/><rect x="9" y="0.5" width="3.5" height="2.5" fill="#ff0"/><rect x="4" y="4" width="3.5" height="2" fill="#00f"/><rect x="9.5" y="3.5" width="2.5" height="1.5" fill="#00f"/><rect x="1.5" y="7" width="4" height="2" fill="#0c0"/><path d="M7.500 2.500 L7.500 9.500 L5.500 8.500 L4.500 10 L7 13.500 L7 15.500 L13 15.500 L13 13.500 L15.500 11 L15.500 8 L13 6.500 L9.500 6 L9.500 2.500 Q8.500 1.500 7.500 2.500 Z" fill="#ff8040" stroke="#000" shape-rendering="auto" stroke-width="1"/>
<rect x="6" y="16" width="8" height="2" fill="#000"/></svg><div class="tl" style="left:456px;top:137px"><b><u>2</u></b></div><div class="tl" style="left:468px;top:137px;letter-spacing:-0.179px"><b>Battery setup</b></div>
<div class="tab" style="left:741px;top:131px;width:210px;height:23px;"></div><svg style="z-index:4;left:773px;top:134px" width="18" height="19" viewBox="0 0 18 19" shape-rendering="crispEdges" ><path d="M3.500 .5 H7.500 V4.500 H16.500 V8.500 H7.500 V17.500 H3.500 V8.500 H.5 V4.500 H3.500 Z" fill="#ffee00" stroke="#000"/>
<path d="M2.500 5v2M4.500 5v1M6.500 5v2M8.500 5v1M10.500 5v2M12.500 5v1M14.500 5v2" stroke="#000"/>
<path d="M5 2.500h2M5 10.500h2M5 12.500h1M5 14.500h2M5 10v5" stroke="#000"/>
<path d="M17.500 5.500V9.500H8.500V18.500H4.500" stroke="#808080" fill="none"/></svg><div class="tl" style="left:798px;top:137px"><b><u>4</u></b></div><div class="tl" style="left:810px;top:137px;letter-spacing:-0.27px"><b>Battery parametrization</b></div>
<div class="tab" style="left:951px;top:131px;width:154px;height:23px;"></div><svg style="z-index:4;left:986px;top:135px" width="16" height="16" viewBox="0 0 16 16" shape-rendering="crispEdges" ><rect x=".5" y=".5" width="15" height="12" rx="2" fill="#fff" stroke="#000" shape-rendering="auto"/>
<rect x="2.500" y="2.500" width="11" height="8" fill="#808080" stroke="#000"/>
<rect x="3" y="3" width="2" height="2" fill="#c0c0c0"/>
<rect x="6" y="13" width="4" height="1" fill="#000"/><rect x="4" y="14" width="8" height="1.500" fill="#000"/></svg><div class="tl" style="left:1010px;top:137px"><b><u>5</u></b></div><div class="tl" style="left:1022px;top:137px;letter-spacing:-0.186px"><b>Monitoring</b></div>
<div class="tab" style="left:1105px;top:131px;width:159px;height:23px;"></div><svg style="z-index:4;left:1139px;top:133px" width="19" height="19" viewBox="0 0 19 19" shape-rendering="crispEdges" ><rect x="1.500" y="0" width="4" height="2" fill="#ee0"/><rect x=".5" y="1.500" width="6" height="7" rx="1.200" fill="#e8e8e8" stroke="#000" shape-rendering="auto"/><rect x="2" y="4" width="3" height="1" fill="#000"/>
<path d="M3.500 9 V12 Q3.500 13.500 5 13.500 H8 Q9.500 13.500 9.500 12 V6.500 Q9.500 5 11 5 H14 Q15.500 5 15.500 6.500 V9" fill="none" stroke="#000" stroke-width="3" shape-rendering="auto"/>
<path d="M3.500 9 V12 Q3.500 13.500 5 13.500 H8 Q9.500 13.500 9.500 12 V6.500 Q9.500 5 11 5 H14 Q15.500 5 15.500 6.500 V9" fill="none" stroke="#b0b0b0" stroke-width="1" shape-rendering="auto"/>
<rect x="12.500" y="9.500" width="6" height="7" rx="1.200" fill="#e8e8e8" stroke="#000" shape-rendering="auto"/><rect x="14" y="12" width="3" height="1" fill="#000"/><rect x="13.500" y="16.500" width="4" height="2" fill="#ee0"/></svg><div class="tl" style="left:1164px;top:137px"><b><u>6</u></b></div><div class="tl" style="left:1176px;top:137px;letter-spacing:0.237px"><b>I/O Testing</b></div>
<div class="tab" style="left:562px;top:129px;width:179px;height:26px;z-index:3;"></div><svg style="z-index:4;left:597px;top:131px" width="19" height="19" viewBox="0 0 19 19" shape-rendering="crispEdges" ><rect x="1.500" y="1.500" width="17" height="17" rx="2" fill="#000" shape-rendering="auto"/>
<rect x=".5" y=".5" width="17" height="17" rx="2" fill="#f00" stroke="#000" shape-rendering="auto"/>
<rect x="3.500" y="3.500" width="11" height="11" fill="#fff" stroke="#000"/>
<path d="M4 10 L10 4 L4 4 Z" fill="#d0d0d0"/>
<path d="M9 5.500 L9 9 L12.500 9.500 M9 9 L5.500 12.500" stroke="#000" stroke-width="1.500" fill="none" shape-rendering="auto"/></svg><div class="tl" style="left:623px;top:137px"><b><u>3</u></b></div><div class="tl" style="left:635px;top:137px;letter-spacing:-0.18px"><b>Battery lifedata</b></div>

<div id="tbl" class="a"><div id="tbl2" class="a"></div></div>
<div id="tin" class="a">
 <div class="hd" style="left:0;width:470px">DATA</div>
 <div class="hd" style="left:470px;width:156px">UNIT</div>
 <div class="hd" style="left:626px;width:378px">VALUE</div>
 <div class="vl" style="left:470px"></div><div class="vl" style="left:626px"></div>
<div class="a" style="left:0;top:21px;width:1004px;height:721px">
<div class="row" style="top:0px"><span class="d">8 - Cyles at full nameplate capacity</span><span class="u"></span><span class="v">203</span></div>
<div class="row" style="top:21px"><span class="d">9 - Cyles at 80% nameplate capacity</span><span class="u"></span><span class="v">254</span></div>
<div class="row" style="top:42px"><span class="d">10 - Cum cap.(Uch &lt; Ubat &lt; Ufch)</span><span class="u">Ah</span><span class="v">457</span></div>
<div class="row" style="top:63px"><span class="d">11 - Cum cap.(Ufch &lt; Ubat &lt; Uregen)</span><span class="u">Ah</span><span class="v">110</span></div>
<div class="row" style="top:84px"><span class="d">12 - Number of BMI changes</span><span class="u"></span><span class="v">2</span></div>
<div class="row" style="top:105px"><span class="d">13 - Number of end of charge detections</span><span class="u"></span><span class="v">914</span></div>
<div class="row" style="top:126px"><span class="d">14 - Number of end of Second charge detections</span><span class="u"></span><span class="v">860</span></div>
<div class="row" style="top:147px"><span class="d">15 - Number of regen braking</span><span class="u"></span><span class="v">1600</span></div>
<div class="row" style="top:168px"><span class="d">16 - Cumulated operating time</span><span class="u">Days</span><span class="v">1966</span></div>
<div class="row" style="top:189px"><span class="d">17 - Thermal cycles</span><span class="u"></span><span class="v">3</span></div>
<div class="row" style="top:210px"><svg style="left:6px;top:3px" width="11" height="13" viewBox="0 0 11 13"><text x="0" y="11.300" font-family="Liberation Mono, monospace" font-weight="bold" font-size="17.500" textLength="11" lengthAdjust="spacingAndGlyphs" fill="#0818f0">W</text></svg><span class="d">18 - N° of failed cells per string (&lt;- OCV at 80% af...</span><span class="u"></span><span class="v">1</span></div>
<div class="row" style="top:231px"><svg style="left:6px;top:3px" width="11" height="13" viewBox="0 0 11 13"><text x="0" y="11.300" font-family="Liberation Mono, monospace" font-weight="bold" font-size="17.500" textLength="11" lengthAdjust="spacingAndGlyphs" fill="#0818f0">W</text></svg><span class="d">19 - N° of failed cells per string (&lt;- OCV during ch...</span><span class="u"></span><span class="v">1</span></div>
<div class="row" style="top:252px"><span class="d">20 - Date of first cell failure</span><span class="u">Days</span><span class="v">1918</span></div>
<div class="row" style="top:273px"><span class="d">21 - Date of second cell failure</span><span class="u">Days</span><span class="v">0</span></div>
<div class="row" style="top:294px"><span class="d">22 - Date of third cell failure</span><span class="u">Days</span><span class="v">0</span></div>
<div class="row" style="top:315px"><span class="d">23 - Date of fourth cell failure</span><span class="u">Days</span><span class="v">0</span></div>
<div class="row" style="top:336px"><span class="d">24 - Date of fifth cell failure</span><span class="u">Days</span><span class="v">0</span></div>
<div class="row" style="top:357px"><span class="d">25 - Date of sixth cell failure</span><span class="u">Days</span><span class="v">0</span></div>
<div class="row" style="top:378px"><span class="d">26 - Date of seventh cell failure</span><span class="u">Days</span><span class="v">0</span></div>
<div class="row" style="top:399px"><span class="d">27 - Date of eighth cell failure</span><span class="u">Days</span><span class="v">0</span></div>
<div class="row" style="top:420px"><span class="d">28 - Date of ninth cell failure</span><span class="u">Days</span><span class="v">0</span></div>
<div class="row" style="top:441px"><span class="d">29 - Date of tenth cell failure</span><span class="u">Days</span><span class="v">0</span></div>
<div class="row sel" style="top:462px"><span class="d">30 - Warranty status</span><span class="u"></span><span class="v">WARRANTY ACTIVE ; LDM byte value is hex0A</span><i class="foc"></i></div>
<div class="row" style="top:483px"><span class="d">31 - Usage below 20% SOC counter</span><span class="u"></span><span class="v">2</span></div>
<div class="row" style="top:504px"><span class="d">32 - Usage below 10% SOC counter</span><span class="u"></span><span class="v">0</span></div>
<div class="row" style="top:525px"><span class="d">33 - Usage below 3% SOC counter</span><span class="u"></span><span class="v">0</span></div>
<div class="row" style="top:546px"><span class="d">34 - SOCeoc - SOCknee last stored</span><span class="u">%</span><span class="v">0,00</span></div>
<div class="row" style="top:567px"><span class="d">35 - SOCeoc - SOCknee last stored - 1</span><span class="u">%</span><span class="v">0,00</span></div>
<div class="row" style="top:588px"><span class="d">36 - SOCeoc - SOCknee last stored - 2</span><span class="u">%</span><span class="v">0,00</span></div>
<div class="row" style="top:609px"><span class="d">37 - SOCeoc - SOCknee last stored - 3</span><span class="u">%</span><span class="v">0,00</span></div>
<div class="row" style="top:630px"><span class="d">38 - SOCeoc - SOCknee last stored - 4</span><span class="u">%</span><span class="v">0,00</span></div>
<div class="row" style="top:651px"><span class="d">39 - How many times above CurrMaxRegen in discharge ...</span><span class="u"></span><span class="v">0</span></div>
<div class="row" style="top:672px"><span class="d">40 - How many times above VoltMaxRegen in discharge ...</span><span class="u"></span><span class="v">0</span></div>
<div class="row" style="top:693px"><span class="d">41 - Last reset: automatically done=&gt;0; manually don...</span><span class="u"></span><span class="v">0</span></div>
</div>
 <div id="sb" class="a" style="left:1005px;top:0;width:18px;height:742px;background:#f0f0f0;border-left:1px solid #e3e3e3">
  <svg width="17" height="742" style="left:0;top:0"><path d="M4.500 11 L8.500 7 L12.500 11 Z" fill="#404040"/><path d="M4.500 731.500 L8.500 735.500 L12.500 731.500 Z" fill="#404040"/></svg>
  <div class="a" style="left:1px;top:139px;width:15px;height:585px;border:1px solid #979797;border-radius:2px;background:linear-gradient(90deg,#f2f2f2,#e8e8e9 45%,#d1d1d3 50%,#c3c3c6);box-shadow:inset 0 0 0 1px rgba(255,255,255,.7)"></div>
  <svg width="17" height="10" style="left:0;top:425px"><path d="M5 1.500h7M5 3.500h7M5 5.500h7M5 7.500h7" stroke="#555" stroke-width="1"/></svg>
 </div>
</div>

<!-- bottom of child -->
<div class="a" style="left:223px;top:921px;width:856px;height:15px;border:1px solid #a0a0a0;border-right-color:#fff;border-bottom-color:#fff;box-shadow:inset 1px 1px 0 #696969,inset -1px -1px 0 #e3e3e3"></div>
<div class="btn" style="left:1092px;top:916px;width:81px"></div><div class="tl" style="left:1122px;top:922px;letter-spacing:-0.125px"><b><u>P</u>rint</b></div>
<div class="btn" style="left:1176px;top:916px;width:82px"></div><div class="tl" style="left:1200px;top:922px;letter-spacing:0.086px"><b><u>U</u>pdate</b></div>

<!-- status -->
<div id="status" class="a">
<div class="sp" style="left:0px;width:789px"></div>
<div class="sp" style="left:791px;width:32px"></div>
<div class="sp" style="left:825px;width:32px"></div>
<div class="sp" style="left:859px;width:165px;letter-spacing:-0.766px">Single 125K CAN-USB</div>
<div class="sp" style="left:1027px;width:99px;letter-spacing:-0.515px">Access level 1</div>
<div class="sp" style="left:1128px;width:79px;letter-spacing:-0.156px">06/06/2016</div>
<div class="sp" style="left:1209px;width:52px;letter-spacing:-0.806px">19:19</div>
</div>

<!-- taskbar -->
<div id="task" class="a">
<svg style="left:9px;top:1px" width="36" height="36" viewBox="0 0 36 36" ><defs><radialGradient id="orb" cx=".5" cy=".95" r=".9"><stop offset="0" stop-color="#40d8ff"/><stop offset=".35" stop-color="#1b78c8"/><stop offset=".7" stop-color="#1a4f96"/><stop offset="1" stop-color="#2a64a8"/></radialGradient>
<linearGradient id="orbh" x1="0" y1="0" x2="0" y2="1"><stop offset="0" stop-color="#fff" stop-opacity=".75"/><stop offset="1" stop-color="#fff" stop-opacity=".08"/></linearGradient></defs>
<circle cx="18" cy="18" r="17.500" fill="url(#orb)" stroke="#1d3f6e" stroke-width="1"/>
<circle cx="18" cy="18" r="16.500" fill="none" stroke="#9fd0f0" stroke-opacity=".6" stroke-width="1"/>
<path d="M2.500 17 A15.500 15.500 0 0 1 33.500 17 Q18 22 2.500 17Z" fill="url(#orbh)"/>
<g transform="translate(18 18.500) scale(1.22) translate(-17.500 -18.800)"><path d="M10.500 12.500 Q13.500 10.500 17 12 L15.500 18 Q12.500 16.500 9 18.300 Z" fill="#f26522"/>
<path d="M18.500 12.500 Q22 14 26.500 11.500 L25 17.500 Q21 19.500 17 18.200 Z" fill="#8dc63f"/>
<path d="M8.600 19.800 Q12 18 15 19.500 L13.500 25.500 Q10.500 24 7 26 Z" fill="#00aeef"/>
<path d="M16.600 19.800 Q20.500 21.300 24.600 19 L23 25 Q19.500 27.500 15 25.800 Z" fill="#ffc20e"/></g></svg>
<svg style="left:75px;top:8px" width="28" height="26" viewBox="0 0 28 26" ><rect x="8" y="1" width="18" height="21" fill="#9ec4e8" stroke="#6f9cc8" stroke-width=".8"/><rect x="5" y="1.500" width="18" height="21" fill="#b5d3ee" stroke="#6f9cc8" stroke-width=".8"/><rect x=".5" y="1.500" width="20" height="22" fill="#a8cbec" stroke="#6f9cc8" stroke-width=".8"/>
<circle cx="10.500" cy="12.500" r="8.300" fill="#f47a20" stroke="#e05a00" stroke-width=".6"/><path d="M7.500 7.500 L16 12.500 L7.500 17.500 Z" fill="#fff"/><path d="M21 23.500 L28 22.500" stroke="#8aa0bc" stroke-width="1"/></svg>
<svg style="left:135px;top:6px" width="32" height="29" viewBox="0 0 32 29" ><path d="M1 5 Q1 2.500 3.500 2.500 H13 L15 5 H29 Q31 5 31 7 V26 H1 Z" fill="#f3dc8c" stroke="#d8b856" stroke-width=".8"/>
<rect x="3" y="1" width="3" height="2" fill="#18b038"/><rect x="11" y="3" width="3" height="2" fill="#d03020"/><rect x="19" y="5" width="3" height="2" fill="#2090e8"/>
<path d="M8 4 H18 V6 H8Z M16 6 H26 V8 H16Z" fill="#fff" fill-opacity=".7"/>
<path d="M1 9 H31 V26 H1Z" fill="#f8e9a8" stroke="#d8b856" stroke-width=".8"/>
<path d="M4 17 Q4 15.500 5.500 15.500 H25.500 Q27 15.500 27 17 V27.500 H21 V21 H10 V27.500 H4 Z" fill="#6cc4f0" fill-opacity=".9" stroke="#2d8fd0" stroke-width=".9"/>
<path d="M5.500 17 H25.500" stroke="#d8f4ff" stroke-width="1.500"/>
<path d="M7 10 L8 16 L14 17 L8 18 L7 23 L6 18 L1 17 L6 16 Z" fill="#fff" fill-opacity=".9"/></svg>
<div class="tbtn" style="left:183px"></div><div class="tbtn" style="left:245px"></div><div class="tbtn act" style="left:307px"></div>
<svg style="left:197px;top:2px" width="32" height="30" viewBox="0 0 32 30" ><defs><linearGradient id="ie" x1="0" y1="0" x2="0" y2="1"><stop offset="0" stop-color="#6fd0f8"/><stop offset="1" stop-color="#1c8ee0"/></linearGradient></defs>
<path d="M16.500 4.500 C9 4.500 4.500 10 4.500 17 C4.500 24 9.500 28.500 16.500 28.500 C22 28.500 26 25.500 27.500 21 H21 C20 22.800 18.500 23.600 16.500 23.600 C13.500 23.600 11.300 21.500 11 18.500 H28 C28.500 10 24 4.500 16.500 4.500 Z M11.200 14 C11.800 11.300 13.800 9.500 16.500 9.500 C19.200 9.500 21.200 11.300 21.600 14 Z" fill="url(#ie)" stroke="#1a78c8" stroke-width=".5"/>
<path d="M3.500 27.500 C-1 22 5 8 17 3 C24 0 30 1.500 28.500 7 C28 4 24 3.500 18.500 6 C9 10.500 3.500 20 5.500 25 C6 26.500 7 27 8 27 C6.500 28.500 4.500 28.500 3.500 27.500 Z" fill="#ffc627" stroke="#e8a200" stroke-width=".5"/></svg>
<svg style="left:258px;top:2px" width="36" height="34" viewBox="0 0 36 34" ><g transform="scale(.94)"><path d="M3 22 C2 14 10 8 18 8.500 C27 9 31 15 29.500 21 C28 27 22 26 20 28.500 C18 31 15 31.500 11 30 C6 28.500 3.500 26 3 22 Z" fill="#cfe4f6" stroke="#7fa8cc" stroke-width="1"/>
<circle cx="8.500" cy="21" r="2.600" fill="#e8482c"/><circle cx="13.500" cy="16" r="2.400" fill="#58b83c"/><circle cx="20" cy="13.500" r="2.400" fill="#f0a020"/><circle cx="16.500" cy="24" r="2.300" fill="#a8c8e8" stroke="#7fa8cc" stroke-width=".6"/>
<path d="M17.500 33 L26.500 10 L29 11 L19.500 33.500 Z" fill="#e88820" stroke="#b86010" stroke-width=".5"/>
<path d="M26.500 10 L27 4 Q30 0 33.500 3 Q34 7 29 11 Z" fill="#d8b080" stroke="#a07840" stroke-width=".5"/></g></svg>
<svg style="left:321px;top:10px" width="50" height="26" viewBox="0 0 50 26" ><rect x="0" y="2" width="3" height="12" fill="#f00"/><rect x="4" y="1" width="1.500" height="14" fill="#808080"/>
<rect x="7" y="2" width="25" height="8" fill="#fff"/>
<text x="7.500" y="9.500" font-family="Liberation Sans, sans-serif" font-size="8.500" font-weight="bold" fill="#000" textLength="24" lengthAdjust="spacingAndGlyphs">ZEBRA</text>
<path d="M24.500 9.500 Q21 11 18.500 10.500 Q18 18 24.500 22.500 Q31 18 30.500 10.500 Q28 11 24.500 9.500Z" fill="#c8ccd4" stroke="#808890" stroke-width=".8"/>
<path d="M24.500 11 V21 Q20 17.500 20 12 Q22.500 12 24.500 11Z" fill="#2868d0"/><path d="M24.500 11 V21 Q29 17.500 29 12 Q26.500 12 24.500 11Z" fill="#f8d020"/>
<path d="M20.300 15.500 H24.500 V21 Q21 18.500 20.300 15.500Z" fill="#f8d020"/><path d="M28.700 15.500 H24.500 V21 Q28 18.500 28.700 15.500Z" fill="#2868d0"/></svg>
<div class="a" style="left:1065px;top:12px;font-size:12px;color:#eef3f9;line-height:12px">IT</div>
<svg style="left:1093px;top:17px" width="10" height="6" viewBox="0 0 10 6" ><path d="M0.500 5.500 L5 1 L9.500 5.500 Z" fill="#fff"/></svg>
<svg style="left:1113px;top:12px" width="18" height="17" viewBox="0 0 18 17" ><path d="M2.500 1 V16" stroke="#fff" stroke-width="1.600"/><path d="M3.500 1.500 Q7 0 9.500 2 Q12 3.500 15.500 2.500 V9 Q12 10.500 9.500 9 Q7 7.500 3.500 9 Z" fill="#f4f6f8" stroke="#fff" stroke-width=".6"/>
<circle cx="12" cy="11.500" r="4.500" fill="#e02020" stroke="#fff" stroke-width=".6"/><path d="M10 9.500 L14 13.500 M14 9.500 L10 13.500" stroke="#fff" stroke-width="1.500"/></svg>
<svg style="left:1138px;top:11px" width="17" height="18" viewBox="0 0 17 18" ><rect x="1" y="3" width="9" height="12" rx="1" fill="none" stroke="#fff" stroke-width="1.400"/><rect x="3.500" y="1" width="4" height="2" fill="#fff"/>
<path d="M8 2.500 V5 M12 2.500 V5" stroke="#fff" stroke-width="1.400"/><path d="M6 5 H14 V8 Q14 11 10 11 Q6 11 6 8 Z" fill="#fff" stroke="#8296b0" stroke-width=".6"/><path d="M10 11 V17" stroke="#fff" stroke-width="1.600"/></svg>
<svg style="left:1162px;top:13px" width="18" height="14" viewBox="0 0 18 14" ><rect x="0" y="11" width="2" height="2" fill="#fff"/><rect x="3" y="9" width="2.500" height="4" fill="#fff"/><rect x="6.500" y="6.500" width="2.500" height="6.500" fill="#fff"/><rect x="10" y="4" width="2.500" height="9" fill="#fff"/><rect x="13.500" y="1.500" width="2.500" height="11.500" fill="none" stroke="#fff" stroke-width=".9"/></svg>
<div class="a" style="left:1190px;top:6px;width:70px;text-align:center;font-size:12px;color:#eef3f9;line-height:13px">19:19</div>
<div class="a" style="left:1190px;top:23px;width:70px;text-align:center;font-size:12px;color:#eef3f9;line-height:13px">06/06/2016</div>
<div class="a" style="left:1266px;top:0;width:14px;height:40px;background:linear-gradient(135deg,#8e9db3 0,#5f6f87 45%,#4a596f 55%,#66768d 100%);border-left:1px solid #44536a;box-shadow:inset 1px 0 0 rgba(255,255,255,.35)"></div>
</div>
</body></html>
